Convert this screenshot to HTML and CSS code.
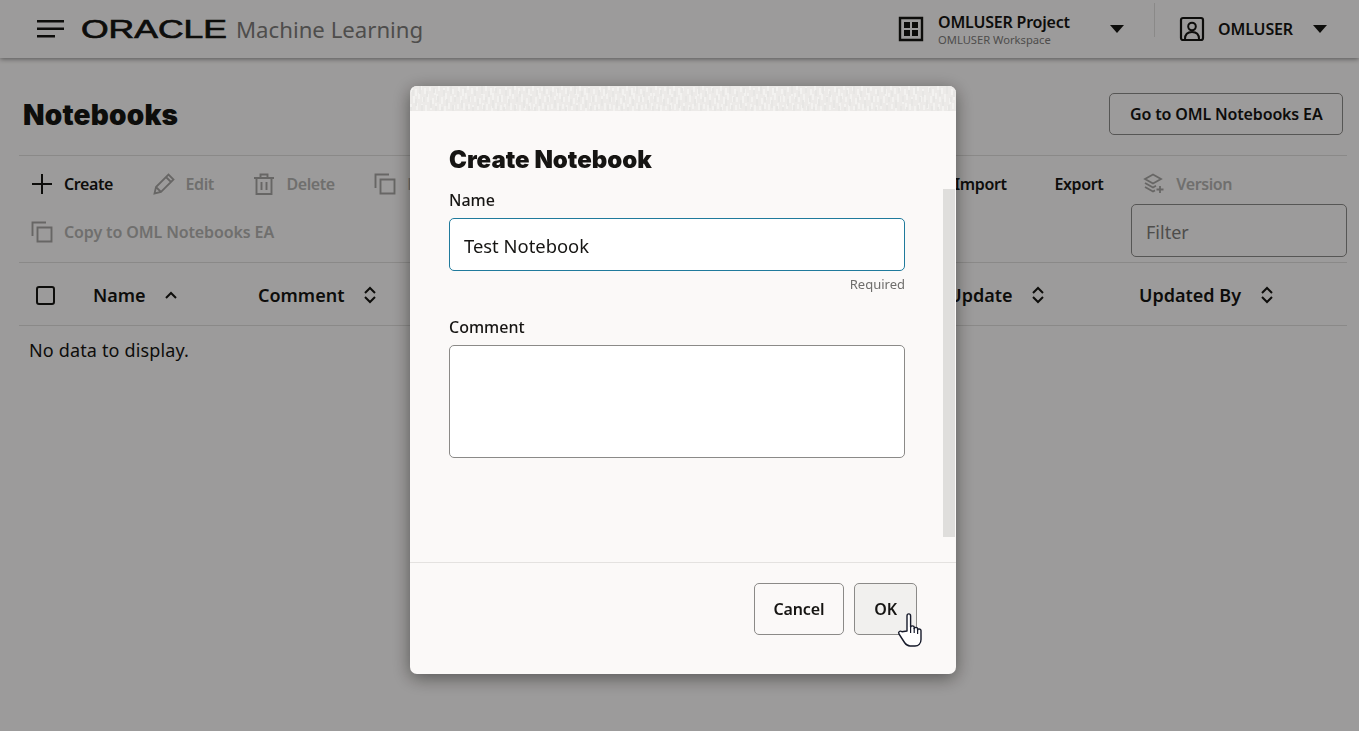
FILE: index.html
```html
<!DOCTYPE html>
<html lang="en">

<head>
	<meta charset="UTF-8">
	<title>Oracle Machine Learning</title>
	<link rel="stylesheet" href="styles.css">
</head>

<body>
	<header class="topbar">
		<div class="brand">
			<svg class="menu-icon" width="28" height="18" viewBox="0 0 28 18"><path d="M0 1.200h27M0 8.700h27M0 16.200h18" fill="none" stroke="#161513" stroke-width="2.400"/></svg>
			<svg class="logo" width="150" height="26" viewBox="0 0 150 26"><text x="0" y="22" textLength="146" lengthAdjust="spacingAndGlyphs" font-family="Liberation Sans" font-size="25.500" fill="#161513" stroke="#161513" stroke-width="0.700">ORACLE</text></svg>
			<span class="product">Machine Learning</span>
		</div>
		<div class="project">
			<svg width="26" height="26" viewBox="0 0 26 26"><path d="M2 2h22v22H2z" fill="none" stroke="#161513" stroke-width="2.400"/><path d="M6 6h6v6H6zM14 6h6v6h-6zM6 14h6v6H6zM14 14h6v6h-6z" fill="#161513"/></svg>
			<div class="project-text">
				<div class="project-name">OMLUSER Project</div>
				<div class="project-sub">OMLUSER Workspace</div>
			</div>
			<span class="caret"></span>
		</div>
		<span class="divider"></span>
		<div class="user">
			<svg width="26" height="26" viewBox="0 0 26 26"><rect x="2" y="2" width="22" height="22" rx="2" fill="none" stroke="#161513" stroke-width="2.200"/><circle cx="13" cy="10.500" r="3.800" fill="none" stroke="#161513" stroke-width="2"/><path d="M6 23c0-5 3-7 7-7s7 2 7 7" fill="none" stroke="#161513" stroke-width="2"/></svg>
			<span class="user-name">OMLUSER</span>
			<span class="caret"></span>
		</div>
	</header>

	<main class="page">
		<div class="title-row">
			<h1>Notebooks</h1>
			<button class="btn">Go to OML Notebooks EA</button>
		</div>

		<div class="toolbar">
			<div class="tool-row">
				<span class="tool tool-create">
					<svg width="22" height="22" viewBox="0 0 22 22"><path d="M11 1v20M1 11h20" stroke="#161513" stroke-width="2"/></svg>
					Create
				</span>
				<span class="tool off">
					<svg width="22" height="22" viewBox="0 0 22 22"><path d="M1.500 20.500l1.500-6.500L15.500 1.500l5 5L8 19zM3 14l5 5M13 4l5 5" fill="none" stroke="#a5a4a2" stroke-width="1.800"/></svg>
					Edit
				</span>
				<span class="tool off">
					<svg width="22" height="22" viewBox="0 0 22 22"><path d="M1 5h20M3.500 5v16h15V5M7.500 5V1.500h7V5M8.500 9v8M13.500 9v8" fill="none" stroke="#a5a4a2" stroke-width="1.900"/></svg>
					Delete
				</span>
				<span class="tool off tool-dup">
					<svg width="22" height="22" viewBox="0 0 22 22"><path d="M1.500 15V1.500H15M6.500 6.500h14v14h-14z" fill="none" stroke="#a5a4a2" stroke-width="1.900"/></svg>
					Duplicate
				</span>
				<span class="tool tool-import">Import</span>
				<span class="tool tool-export">Export</span>
				<span class="tool off">
					<svg width="22" height="22" viewBox="0 0 22 22"><path d="M10 1.500l8 4.500-8 4.500L2 6zM2 10l8 4.500 3-1.700M2 14l8 4.500 2-1.100M17 13v7M13.500 16.500h7" fill="none" stroke="#a5a4a2" stroke-width="1.800"/></svg>
					Version
				</span>
			</div>
			<div class="tool-row second">
				<span class="tool off tool-copy">
					<svg width="22" height="22" viewBox="0 0 22 22"><path d="M1.500 15V1.500H15M6.500 6.500h14v14h-14z" fill="none" stroke="#a5a4a2" stroke-width="1.900"/></svg>
					Copy to OML Notebooks EA
				</span>
				<input class="filter" type="text" placeholder="Filter">
			</div>
		</div>

		<div class="table-head">
			<span class="check"></span>
			<span class="col col-name">Name <svg class="sort" width="14" height="8" viewBox="0 0 14 8"><path d="M2 7l5-5 5 5" fill="none" stroke="#161513" stroke-width="2"/></svg></span>
			<span class="col col-comment">Comment <svg class="sort" width="14" height="20" viewBox="0 0 14 20"><path d="M2 8l5-5 5 5M2 12l5 5 5-5" fill="none" stroke="#161513" stroke-width="2"/></svg></span>
			<span class="col col-update">Last Update <svg class="sort" width="14" height="20" viewBox="0 0 14 20"><path d="M2 8l5-5 5 5M2 12l5 5 5-5" fill="none" stroke="#161513" stroke-width="2"/></svg></span>
			<span class="col col-by">Updated By <svg class="sort" width="14" height="20" viewBox="0 0 14 20"><path d="M2 8l5-5 5 5M2 12l5 5 5-5" fill="none" stroke="#161513" stroke-width="2"/></svg></span>
		</div>
		<div class="no-data">No data to display.</div>
	</main>

	<div class="overlay"></div>

	<div class="dialog">
		<svg class="dialog-strip" width="546" height="25">
			<defs>
				<pattern id="weave" width="47" height="25" patternUnits="userSpaceOnUse">
					<path d="M2 1v5M6 3v7M11 0v4M15 2v6M20 1v4M25 3v6M29 0v5M34 2v7M38 1v4M43 3v5M4 10v7M9 7v6M13 11v5M18 8v8M23 12v6M27 8v6M32 11v7M36 7v7M41 10v6M45 9v7M1 18v5M7 17v7M12 18v5M16 19v6M21 20v4M26 17v6M30 18v6M35 20v5M39 17v6M44 19v5" stroke="#f6f5f3" stroke-width="1.500" fill="none"/>
				</pattern>
				<pattern id="weave2" width="31" height="25" patternUnits="userSpaceOnUse">
					<path d="M3 4v6M10 0v8M17 5v6M24 2v5M6 13v7M14 11v5M21 14v8M28 10v6M1 21v4M12 19v6M26 20v5" stroke="#e7e6e4" stroke-width="2" fill="none"/>
				</pattern>
			</defs>
			<rect width="546" height="25" fill="#eceae8"/>
			<rect width="546" height="25" fill="url(#weave)"/>
			<rect width="546" height="25" fill="url(#weave2)"/>
		</svg>
		<div class="dialog-body">
			<h2>Create Notebook</h2>
			<label class="field-label" for="nbName">Name</label>
			<input class="name-input" id="nbName" type="text" value="Test Notebook">
			<div class="required">Required</div>
			<label class="field-label comment-label" for="nbComment">Comment</label>
			<textarea class="comment-input" id="nbComment"></textarea>
			<div class="scroll-thumb"></div>
		</div>
		<div class="dialog-foot">
			<button class="btn btn-cancel">Cancel</button>
			<button class="btn btn-ok">OK</button>
		</div>
	</div>

	<svg class="hand" width="28" height="36" viewBox="0 0 28 36">
		<path d="M10 19V4c0-2.800 3.600-2.800 3.600 0v11c0-1.500 3.600-1.500 3.600 0v1.500c0-1.500 3.400-1.500 3.400 0v1.500c0-1.500 3.400-1.500 3.400 .500v9c0 4-2.600 6.500-6 6.500h-5c-2.500 0-4-1.300-5.500-3.500L2 22c-1.300-2.200 1.200-3.700 3-2.300z" fill="#fff" stroke="#161a2a" stroke-width="1.400" stroke-linejoin="round"/>
		<path d="M13.600 15v6M17.200 16v5M20.600 18v4" fill="none" stroke="#161a2a" stroke-width="1.200"/>
	</svg>
</body>

</html>
```

FILE: styles.css
```css
* {
	box-sizing: border-box;
}

html,
body {
	height: 100%;
}

body {
	margin: 0;
	overflow: hidden;
	background-color: #fbf9f8;
	color: #161513;
	font-family: "Noto Sans", Arial, sans-serif;
}

.topbar {
	display: flex;
	align-items: center;
	height: 58px;
	padding: 0 32px 0 37px;
	box-shadow: 0 1px 5px rgba(0, 0, 0, 0.45);
}

.brand {
	display: flex;
	align-items: center;
	flex: 1;
}

.menu-icon {
	margin-right: 16px;
}

.logo {
	margin-right: 5px;
}

.product {
	font-size: 22.200px;
	color: #7d7c7a;
}

.project {
	display: flex;
	align-items: center;
	padding-right: 30px;
}

.project-text {
	width: 172px;
	margin-left: 14px;
	padding-top: 1px;
}

.project-name {
	font-size: 16px;
	font-weight: 600;
	letter-spacing: -0.2px;
	line-height: 21px;
}

.project-sub {
	font-size: 11.200px;
	line-height: 14px;
	color: #7d7c7a;
}

.divider {
	align-self: flex-start;
	width: 1px;
	height: 34px;
	margin-top: 3px;
	background-color: #dedcda;
}

.user {
	display: flex;
	align-items: center;
	margin-left: 24px;
}

.user-name {
	width: 95px;
	margin-left: 13px;
	font-size: 16px;
	font-weight: 600;
	letter-spacing: -0.15px;
}

.caret {
	width: 0;
	height: 0;
	border-left: 7.500px solid transparent;
	border-right: 7.500px solid transparent;
	border-top: 8px solid #161513;
}

.page {
	padding: 0 12px 0 19px;
}

.title-row {
	display: flex;
	align-items: center;
	justify-content: space-between;
	height: 98px;
	padding: 14px 4px 0;
	border-bottom: 1px solid #dedcda;
}

h1 {
	margin: 3px 0 0;
	font-family: Inter, sans-serif;
	font-size: 28px;
	font-weight: 900;
	letter-spacing: 0.2px;
}

.btn {
	height: 42px;
	padding: 0 19.500px;
	border: 1px solid #8b8a88;
	border-radius: 5px;
	background-color: transparent;
	color: #161513;
	font-family: "Noto Sans", Arial, sans-serif;
	font-size: 16px;
	font-weight: 600;
	letter-spacing: -0.15px;
}

.toolbar {
	height: 107px;
	border-bottom: 1px solid #dedcda;
}

.tool-row {
	display: flex;
	align-items: center;
	height: 56px;
	padding-left: 12px;
}

.tool-row.second {
	justify-content: space-between;
	height: 53px;
	margin-top: -8px;
}

.tool {
	display: flex;
	align-items: center;
	gap: 11px;
	margin-right: 39.500px;
	font-size: 16px;
	font-weight: 600;
	letter-spacing: -0.4px;
}

.tool.off {
	color: #b3b2b0;
}

.tool-dup {
	width: 580px;
	margin-right: 0;
}

.tool-import {
	margin-right: 48px;
}

.tool-export {
	margin-right: 40px;
}

.tool-copy {
	margin-top: 3px;
	letter-spacing: -0.12px;
}

.filter {
	width: 216px;
	height: 53px;
	padding: 2px 14px 0;
	border: 1px solid #8b8a88;
	border-radius: 5px;
	background-color: transparent;
	font-family: "Noto Sans", Arial, sans-serif;
	font-size: 18px;
}

.filter::placeholder {
	color: #7d7c7a;
}

.table-head {
	display: flex;
	align-items: center;
	height: 63px;
	padding: 2px 0 0 17px;
	border-bottom: 1px solid #dedcda;
	font-size: 18px;
	font-weight: 600;
}

.check {
	width: 19px;
	height: 19px;
	border: 2px solid #161513;
	border-radius: 3px;
}

.col {
	display: flex;
	align-items: center;
	gap: 18.500px;
}

.col-name {
	width: 165px;
	margin-left: 38px;
}

.col-comment {
	width: 649px;
}

.col-update {
	width: 232px;
}

.no-data {
	padding: 12px 10px;
	font-size: 18px;
	letter-spacing: 0.15px;
}

.overlay {
	position: fixed;
	inset: 0;
	background-color: rgba(0, 0, 0, 0.375);
}

.dialog {
	position: fixed;
	left: 410px;
	top: 86px;
	display: flex;
	flex-direction: column;
	width: 546px;
	height: 588px;
	overflow: hidden;
	border-radius: 7px;
	background-color: #fbf9f8;
	box-shadow: 0 4px 18px rgba(0, 0, 0, 0.45);
}

.dialog-strip {
	display: block;
	flex: none;
}

.dialog-body {
	position: relative;
	flex: 1;
	padding: 33px 51px 0 39px;
	border-bottom: 1px solid #e4e2e0;
}

h2 {
	margin: 0 0 13px;
	font-family: Inter, sans-serif;
	font-size: 24px;
	font-weight: 900;
	line-height: 32px;
}

.field-label {
	display: block;
	font-size: 16px;
	font-weight: 500;
	line-height: 22px;
}

.name-input,
.comment-input {
	display: block;
	width: 456px;
	padding: 2px 14px 0;
	border: 1px solid #8b8a88;
	border-radius: 5px;
	background-color: #fff;
	color: #161513;
	font-family: "Noto Sans", Arial, sans-serif;
	font-size: 18.400px;
}

.name-input {
	height: 53px;
	margin-top: 7px;
	border-color: #1f7a9c;
}

.required {
	margin-top: 4px;
	font-size: 13px;
	line-height: 18px;
	text-align: right;
	color: #6f6e6c;
}

.comment-label {
	margin-top: 23px;
}

.comment-input {
	height: 113px;
	margin-top: 7px;
	resize: none;
}

.scroll-thumb {
	position: absolute;
	right: 1px;
	top: 78px;
	width: 12px;
	height: 348px;
	background-color: #dfdedc;
}

.dialog-foot {
	display: flex;
	justify-content: flex-end;
	gap: 10px;
	flex: none;
	height: 111px;
	padding: 20px 39px 0 0;
}

.dialog-foot .btn {
	height: 52px;
	padding: 0 19px;
}

.btn-ok {
	background-color: #f1f0ee;
}

.hand {
	position: fixed;
	left: 897px;
	top: 612px;
}
```
